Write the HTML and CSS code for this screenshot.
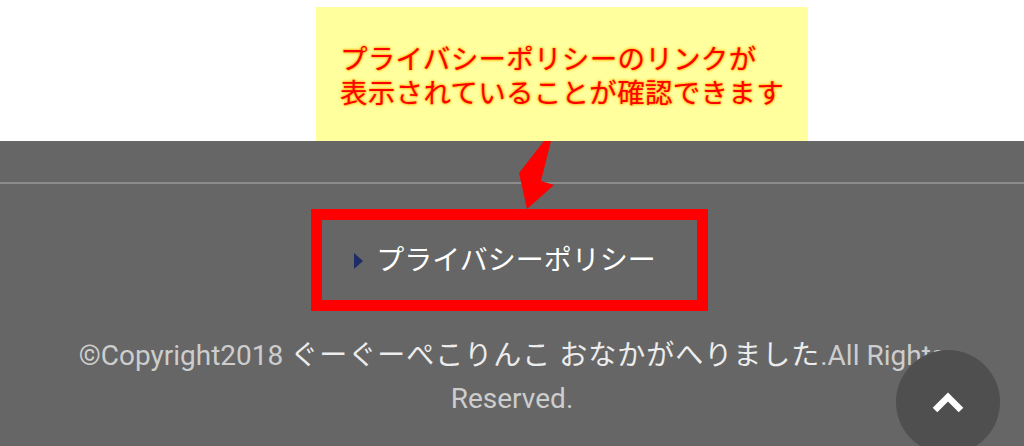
FILE: index.html
```html
<!DOCTYPE html>
<html lang="ja">
<head>
<meta charset="utf-8">
<title>フッター</title>
<link rel="stylesheet" href="styles.css">
</head>
<body>
<div class="page">
  <div class="top-area"></div>
  <footer class="footer">
    <div class="footer-rule"></div>
    <nav class="footer-menu">
      <a class="footer-link" href="#"><span class="marker"></span>プライバシーポリシー</a>
    </nav>
    <p class="copyright">©Copyright2018 <span class="ja">ぐーぐーぺこりんこ おなかがへりました</span>.All Rights Reserved.</p>
  </footer>

  <div class="callout">プライバシーポリシーのリンクが<br>表示されていることが確認できます</div>
  <svg class="callout-arrow" width="1024" height="446" viewBox="0 0 1024 446">
    <polygon points="544,141 551,141 541,181 554,185 527,209 519,173" fill="#ff0000"/>
  </svg>
  <div class="highlight-box"></div>

  <a class="to-top" href="#">
    <svg width="36" height="28" viewBox="0 0 36 28">
      <polyline points="5,23 18,10 31,23" fill="none" stroke="#ffffff" stroke-width="6.5" stroke-linecap="butt" stroke-linejoin="miter"/>
    </svg>
  </a>
</div>
</body>
</html>
```
FILE: styles.css
```css
* { box-sizing: border-box; }
html, body {
  margin: 0;
  padding: 0;
  width: 1024px;
  height: 446px;
  overflow: hidden;
  background: #ffffff;
  font-family: Roboto, "Noto Sans CJK JP", sans-serif;
}
.page {
  position: relative;
  width: 1024px;
  height: 446px;
  display: flex;
  flex-direction: column;
}
.top-area {
  height: 141px;
  background: #ffffff;
}
.footer {
  flex: 1;
  background: #666666;
  padding-top: 41px;
}
.footer-rule {
  height: 2px;
  background: #8c8c8c;
}
.footer-menu {
  display: flex;
  justify-content: center;
  margin-top: 56px;
}
.footer-link {
  display: flex;
  align-items: center;
  gap: 13px;
  margin-right: 14px;
  color: #ffffff;
  text-decoration: none;
  font-size: 28px;
  line-height: 42px;
}
.marker {
  width: 0;
  height: 0;
  border-top: 8px solid transparent;
  border-bottom: 8px solid transparent;
  border-left: 9px solid #1e2d66;
}
.copyright {
  margin: 52px 0 0;
  padding: 0 60px;
  text-align: center;
  color: #cdcdcd;
  font-size: 28px;
  line-height: 43px;
}
.copyright .ja {
  color: #ececec;
  letter-spacing: 1px;
}
.callout {
  position: absolute;
  left: 316px;
  top: 7px;
  width: 492px;
  height: 134px;
  background: #ffff9e;
  padding: 33px 0 0 24px;
  color: #ff0000;
  font-family: "Noto Sans CJK JP", sans-serif;
  font-weight: 400;
  font-size: 27.5px;
  line-height: 34px;
  letter-spacing: 0.3px;
  text-shadow: 0 0 2px #ff9d00, 0 0 3px #ffc400, 0 0 4px #ffe066;
}
.callout-arrow {
  position: absolute;
  left: 0;
  top: 0;
  pointer-events: none;
}
.highlight-box {
  position: absolute;
  left: 311px;
  top: 209px;
  width: 397px;
  height: 102px;
  border: 11px solid #ff0000;
}
.to-top {
  position: absolute;
  left: 896px;
  top: 350px;
  width: 104px;
  height: 104px;
  border-radius: 50%;
  background: #4f4f4f;
  display: flex;
  align-items: center;
  justify-content: center;
}
.to-top svg {
  margin-top: -2px;
}
```
